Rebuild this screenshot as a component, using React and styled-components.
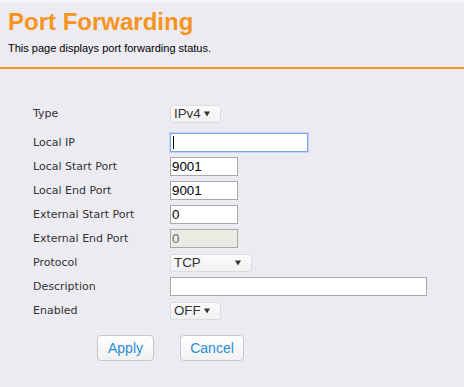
import styled, { createGlobalStyle } from 'styled-components';

const GlobalStyle = createGlobalStyle`
  html, body {
    margin: 0;
    padding: 0;
    background-color: #ecebf2;
  }
  body {
    font-family: 'Liberation Sans', Arial, sans-serif;
  }
`;

const rows = [
  { label: 'Local Start Port', value: '9001', width: 68 },
  { label: 'Local End Port', value: '9001', width: 68 },
  { label: 'External Start Port', value: '0', width: 68 },
  { label: 'External End Port', value: '0', width: 68, disabled: true },
];

const Arrow = () => (
  <svg width="6" height="6" viewBox="0 0 6 6">
    <path d="M0 0.5 H6 L3 5.5 Z" fill="#333333" />
  </svg>
);

const Select = ({ value, width }) => (
  <SelectBox $width={width}>
    <span>{value}</span>
    <Arrow />
  </SelectBox>
);

const App = () => (
  <Page>
    <GlobalStyle />
    <Header>
      <Title>Port Forwarding</Title>
      <Subtitle>This page displays port forwarding status.</Subtitle>
    </Header>
    <Form>
      <Row $spaced>
        <Label>Type</Label>
        <Select value="IPv4" width={51} />
      </Row>
      <Row>
        <Label>Local IP</Label>
        <FocusWrap>
          <TextInput $width={138} $focused readOnly value="" />
          <Caret />
        </FocusWrap>
      </Row>
      {rows.map((r) => (
        <Row key={r.label}>
          <Label>{r.label}</Label>
          <TextInput $width={r.width} readOnly disabled={r.disabled} value={r.value} />
        </Row>
      ))}
      <Row>
        <Label>Protocol</Label>
        <Select value="TCP" width={82} />
      </Row>
      <Row>
        <Label>Description</Label>
        <TextInput $width={257} readOnly value="" />
      </Row>
      <Row>
        <Label>Enabled</Label>
        <Select value="OFF" width={51} />
      </Row>
      <ButtonRow>
        <Button>Apply</Button>
        <Button $wide>Cancel</Button>
      </ButtonRow>
    </Form>
  </Page>
);

export default App;

const Page = styled.div`
  min-height: 100vh;
  background-color: #ecebf2;
`;

const Header = styled.div`
  border-top: 3px solid #f4f3f8;
  border-bottom: 2px solid #f7941d;
  padding: 5px 8px 12px;
`;

const Title = styled.h1`
  margin: 0;
  font-family: 'Liberation Sans', Arial, sans-serif;
  font-size: 24px;
  line-height: 28px;
  font-weight: bold;
  color: #f7941d;
`;

const Subtitle = styled.p`
  margin: 6px 0 0;
  font-size: 11px;
  line-height: 13px;
  color: #000000;
`;

const Form = styled.div`
  padding: 35px 0 0 33px;
`;

const Row = styled.div`
  display: flex;
  align-items: center;
  height: 19px;
  margin-bottom: ${(props) => (props.$spaced ? '10px' : '5px')};
`;

const Label = styled.span`
  width: 137px;
  flex-shrink: 0;
  font-family: 'DejaVu Sans', Verdana, sans-serif;
  font-size: 11px;
  color: #333333;
`;

const FocusWrap = styled.span`
  position: relative;
  display: inline-flex;
`;

const Caret = styled.span`
  position: absolute;
  left: 3px;
  top: 3px;
  width: 1px;
  height: 13px;
  background-color: #000000;
`;

const TextInput = styled.input`
  box-sizing: border-box;
  width: ${(props) => props.$width}px;
  height: 19px;
  margin: 0;
  padding: 0 1px;
  border: 1px solid ${(props) => (props.$focused ? '#7ea3e6' : '#a9a9a9')};
  box-shadow: ${(props) => (props.$focused ? '0 0 0 1px #c3d4f4' : 'none')};
  border-radius: 0;
  outline: none;
  background-color: #ffffff;
  font-family: 'Liberation Sans', Arial, sans-serif;
  font-size: 13.33px;
  color: #000000;
  &:disabled {
    background-color: #ebebe4;
    color: #6d6d6d;
  }
`;

const SelectBox = styled.div`
  box-sizing: border-box;
  width: ${(props) => props.$width}px;
  height: 18px;
  display: flex;
  align-items: center;
  justify-content: space-between;
  padding: 0 10px 0 3px;
  border: 1px solid #dcdcdf;
  border-radius: 3px;
  background: linear-gradient(#fbfbfb, #f1f1f3);
  font-family: 'Liberation Sans', Arial, sans-serif;
  font-size: 13.33px;
  color: #333333;
`;

const ButtonRow = styled.div`
  display: flex;
  gap: 26px;
  margin-top: 15px;
  padding-left: 64px;
`;

const Button = styled.button`
  box-sizing: border-box;
  width: ${(props) => (props.$wide ? '64px' : '57px')};
  height: 26px;
  padding: 0;
  border: 1px solid #c8c8cc;
  border-radius: 4px;
  background: linear-gradient(#ffffff, #f1f1f3);
  font-family: 'Liberation Sans', Arial, sans-serif;
  font-size: 14px;
  color: #2b8fd6;
  cursor: pointer;
`;
